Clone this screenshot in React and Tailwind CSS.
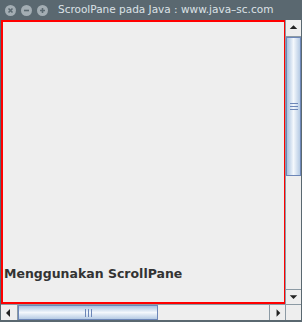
import React from "react";

const Arrow = ({ dir }) => {
  const pts = {
    up: "4,9 8,5 12,9",
    down: "4,6 8,10 12,6",
    left: "9,4 5,8 9,12",
    right: "7,4 11,8 7,12",
  };
  return (
    <svg width="16" height="16" viewBox="0 0 16 16">
      <polygon points={pts[dir]} fill="#222" />
    </svg>
  );
};

const ArrowButton = ({ dir, className }) => (
  <div
    className={`flex items-center justify-center bg-[#eeeeee] border-[#8c9aa4] ${className}`}
  >
    <Arrow dir={dir} />
  </div>
);

const TitleButton = ({ children }) => (
  <div className="w-[11px] h-[11px] rounded-full bg-[#a3adb3] flex items-center justify-center">
    <svg width="11" height="11" viewBox="0 0 11 11">{children}</svg>
  </div>
);

export default function App() {
  return (
    <div
      className="w-[302px] h-[322px] bg-[#5a6870] flex flex-col"
      style={{ fontFamily: "'DejaVu Sans', sans-serif" }}
    >
      {/* title bar */}
      <div className="h-[20px] flex items-center pl-[5px] gap-[5px]">
        <TitleButton>
          <path d="M3.5 3.5 L7.5 7.5 M7.5 3.5 L3.5 7.5" stroke="#5a6870" strokeWidth="1.6" />
        </TitleButton>
        <TitleButton>
          <path d="M3 5.5 H8" stroke="#5a6870" strokeWidth="1.6" />
        </TitleButton>
        <TitleButton>
          <path d="M3 5.5 H8 M5.5 3 V8" stroke="#5a6870" strokeWidth="1.6" />
        </TitleButton>
        <span className="ml-[5px] text-[10.5px] text-[#dce2e6] whitespace-nowrap">
          ScroolPane pada Java : www.java–sc.com
        </span>
      </div>

      {/* body */}
      <div className="flex-1 ml-[1px] mr-[1px] mb-[2px] flex flex-col bg-[#eeeeee]">
        <div className="flex flex-1">
          <div className="flex-1 bg-[#ff0000] pl-[2px] pt-[2px] pb-[2px] pr-[1px] flex">
            <div className="flex-1 bg-[#eeeeee] flex flex-col justify-end pb-[22px] pl-[1px]">
              <span className="text-[12.5px] font-bold text-[#333333] leading-none">
                Menggunakan ScrollPane
              </span>
            </div>
          </div>
          {/* vertical scrollbar */}
          <div className="w-[16px] flex flex-col border-l border-[#8c9aa4]">
            <ArrowButton dir="up" className="h-[17px] border-b" />
            <div className="h-[139px] border border-[#6d87b8] bg-gradient-to-r from-[#a9c2e0] via-[#f4f8fc] to-[#b6cbe4] flex items-center justify-center">
              <div className="flex flex-col gap-[2px]">
                <div className="w-[8px] h-[1px] bg-[#6d87b8]" />
                <div className="w-[8px] h-[1px] bg-[#6d87b8]" />
                <div className="w-[8px] h-[1px] bg-[#6d87b8]" />
              </div>
            </div>
            <div className="flex-1" />
            <ArrowButton dir="down" className="h-[15px] border-t" />
          </div>
        </div>
        {/* horizontal scrollbar */}
        <div className="h-[16px] flex border-t border-[#8c9aa4]">
          <ArrowButton dir="left" className="w-[17px] border-r" />
          <div className="w-[140px] border border-[#6d87b8] bg-gradient-to-b from-[#a9c2e0] via-[#f4f8fc] to-[#b6cbe4] flex items-center justify-center">
            <div className="flex gap-[2px]">
              <div className="h-[8px] w-[1px] bg-[#6d87b8]" />
              <div className="h-[8px] w-[1px] bg-[#6d87b8]" />
              <div className="h-[8px] w-[1px] bg-[#6d87b8]" />
            </div>
          </div>
          <div className="flex-1" />
          <ArrowButton dir="right" className="w-[16px] border-l" />
          <div className="w-[16px] border-l border-[#8c9aa4]" />
        </div>
      </div>
    </div>
  );
}
